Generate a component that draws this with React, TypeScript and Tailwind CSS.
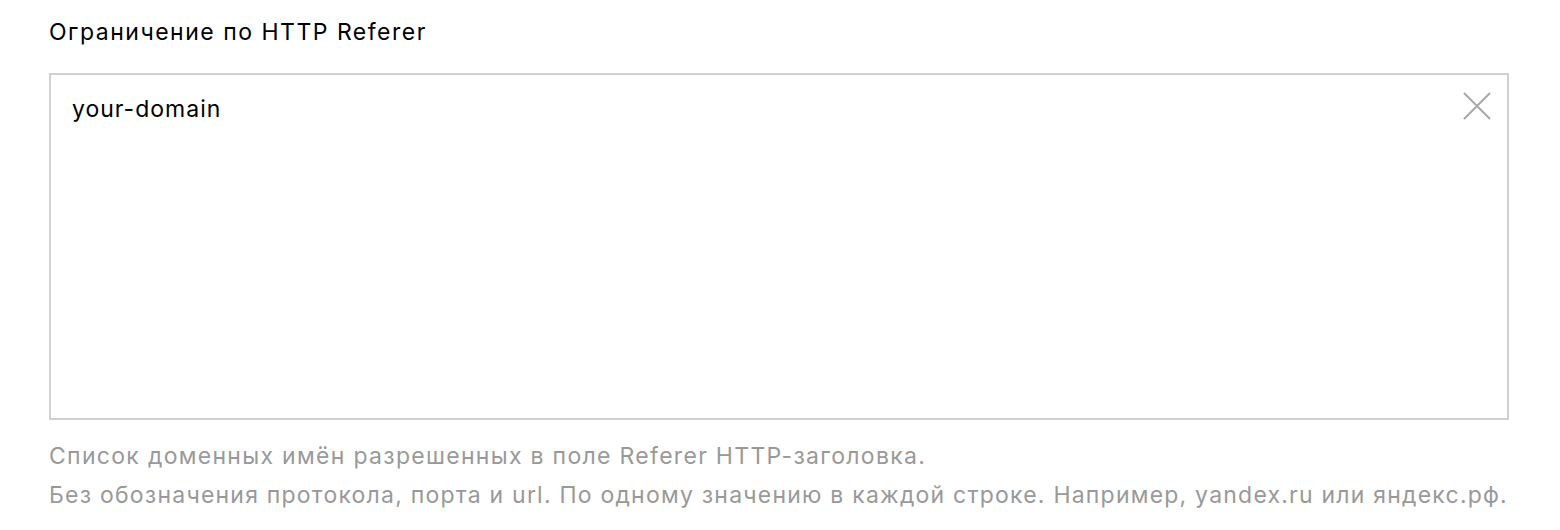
export default function App() {
  return (
    <div className="min-h-[530px] w-[1560px] bg-white px-[49px] pt-[16px] font-['Inter',sans-serif] text-[23px] tracking-[1.3px]">
      <h2 className="leading-[32px] tracking-[1.5px] text-[#000]">Ограничение по HTTP Referer</h2>
      <div className="relative mt-[25px] h-[347px] w-[1460px] border-2 border-[#d0d0d0] px-[21px] pt-[18px]">
        <div className="leading-[32px] tracking-[1px] text-[#000]">your-domain</div>
        <button className="absolute right-[15px] top-[16px] h-[30px] w-[30px] text-[#a8a8a8]" aria-label="Очистить">
          <svg viewBox="0 0 30 30" className="h-full w-full" fill="none" stroke="currentColor" strokeWidth="2">
            <path d="M2 2L28 28M28 2L2 28" />
          </svg>
        </button>
      </div>
      <div className="mt-[17px] whitespace-nowrap leading-[39px] text-[#999]">
        <p>Список доменных имён разрешенных в поле Referer HTTP-заголовка.</p>
        <p className="tracking-[1.22px]">Без обозначения протокола, порта и url. По одному значению в каждой строке. Например, yandex.ru или яндекс.рф.</p>
      </div>
    </div>
  );
}
